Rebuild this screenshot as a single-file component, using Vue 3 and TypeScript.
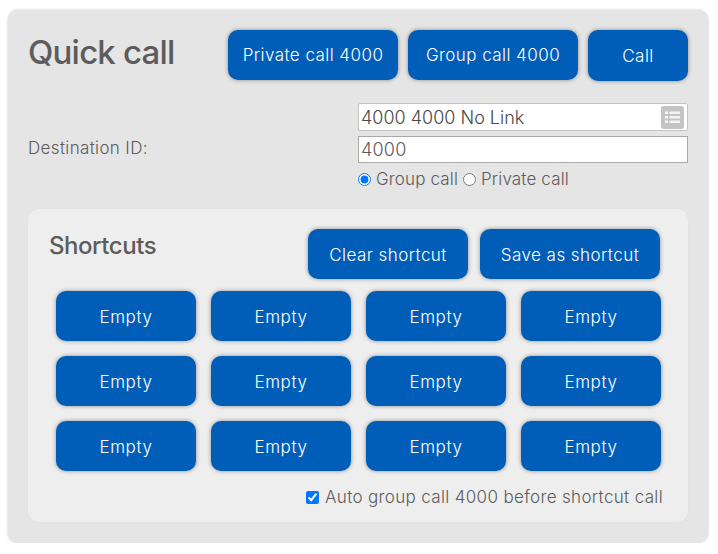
<script setup lang="ts">
const shortcuts: string[] = Array.from({ length: 12 }, () => 'Empty')
</script>

<template>
  <main class="panel">
    <header class="top">
      <h1>Quick call</h1>
      <div class="actions">
        <button class="btn private">Private call 4000</button>
        <button class="btn group">Group call 4000</button>
        <button class="btn call">Call</button>
      </div>
    </header>
    <section class="dest">
      <label class="dest-label">Destination ID:</label>
      <div class="fields">
        <div class="combo">
          <span>4000 4000 No Link</span>
          <span class="list-icon">
            <svg width="15" height="13" viewBox="0 0 15 13">
              <g fill="#f4f4f4">
                <rect x="0" y="0.5" width="3" height="2.5" />
                <rect x="4.5" y="0.5" width="10.5" height="2.5" />
                <rect x="0" y="5" width="3" height="2.5" />
                <rect x="4.5" y="5" width="10.5" height="2.5" />
                <rect x="0" y="9.5" width="3" height="2.5" />
                <rect x="4.5" y="9.5" width="10.5" height="2.5" />
              </g>
            </svg>
          </span>
        </div>
        <input class="id-input" type="text" value="4000" />
        <div class="radios">
          <label><input type="radio" name="kind" checked />Group call</label>
          <label><input type="radio" name="kind" />Private call</label>
        </div>
      </div>
    </section>
    <section class="card">
      <div class="card-top">
        <h2>Shortcuts</h2>
        <div class="card-actions">
          <button class="btn clear">Clear shortcut</button>
          <button class="btn save">Save as shortcut</button>
        </div>
      </div>
      <div class="grid">
        <button v-for="(s, i) in shortcuts" :key="i" class="btn cell">{{ s }}</button>
      </div>
      <label class="auto"><input type="checkbox" checked />Auto group call 4000 before shortcut call</label>
    </section>
  </main>
</template>

<style>
html, body { margin: 0; background: #fff; }
</style>

<style scoped>
.panel {
  box-sizing: border-box;
  width: 700px;
  height: 533px;
  margin: 10px 0 0 8px;
  padding: 20px;
  background: #e5e5e5;
  border-radius: 10px;
  box-shadow: 0 0 3px rgba(0, 0, 0, 0.22);
  color: #5c5c5c;
  font-family: Inter, "Open Sans", sans-serif;
  font-size: 17px;
  font-weight: 300;
  letter-spacing: 0.35px;
}
.top { display: flex; justify-content: space-between; align-items: flex-start; }
h1 { margin: 0; font-size: 33px; line-height: 44px; font-weight: 500; letter-spacing: -0.8px; }
.actions { display: flex; gap: 10px; }
.btn {
  box-sizing: border-box;
  height: 50px;
  border: 0;
  padding: 0;
  border-radius: 10px;
  background: #005eb8;
  color: #fff;
  font: inherit;
  letter-spacing: 0.45px;
  box-shadow: 0 0 4px rgba(0, 0, 0, 0.4);
}
.private, .group { width: 170px; }
.call { width: 100px; height: 51px; }
.dest { display: flex; justify-content: space-between; align-items: center; margin-top: 22px; }
.dest-label { margin-top: -2px; }
.fields { width: 330px; display: flex; flex-direction: column; }
.combo {
  box-sizing: border-box;
  height: 28px;
  display: flex;
  justify-content: space-between;
  align-items: center;
  padding: 0 3px 0 2px;
  background: #fff;
  border: 1px solid #c4c4c4;
  border-radius: 2px;
  color: #484848;
  font-size: 18px;
  letter-spacing: 0;
}
.list-icon {
  width: 23px;
  height: 23px;
  background: #c4c4c4;
  border-radius: 3px;
  display: flex;
  align-items: center;
  justify-content: center;
}
.id-input {
  box-sizing: border-box;
  width: 330px;
  height: 27px;
  margin: 5px 0 0;
  padding: 0 2px;
  background: #fff;
  border: 1px solid #a8a8a8;
  border-radius: 0;
  outline: none;
  color: #5c5c5c;
  font: inherit;
  font-size: 18px;
  letter-spacing: 0.2px;
}
.radios { display: flex; gap: 5px; height: 31px; align-items: center; letter-spacing: 0.15px; padding-top: 1px; box-sizing: border-box; }
.radios label { display: flex; align-items: center; }
.radios input { width: 13px; height: 13px; margin: 0 5px 0 0; }
.card {
  box-sizing: border-box;
  height: 313px;
  margin-top: 15px;
  padding: 20px 28px 0 21px;
  background: #eee;
  border-radius: 10px;
  box-shadow: 0 0 1px rgba(0, 0, 0, 0.08);
}
.card-top { display: flex; justify-content: space-between; align-items: flex-start; }
h2 { margin: 0; font-size: 24px; line-height: 34px; font-weight: 500; letter-spacing: -0.45px; }
.card-actions { display: flex; gap: 12px; }
.clear { width: 160px; padding-top: 1px; }
.save { width: 180px; padding-top: 1px; }
.grid {
  display: grid;
  grid-template-columns: repeat(4, 140px);
  column-gap: 15px;
  row-gap: 15px;
  margin: 12px 0 0 7px;
}
.cell { padding-top: 1px; letter-spacing: 0.6px; }
.auto {
  display: flex;
  justify-content: flex-end;
  align-items: center;
  margin: 16px -3px 0 0;
  height: 20px;
}
.auto input { width: 13px; height: 13px; margin: 0 6px 0 0; }
</style>
